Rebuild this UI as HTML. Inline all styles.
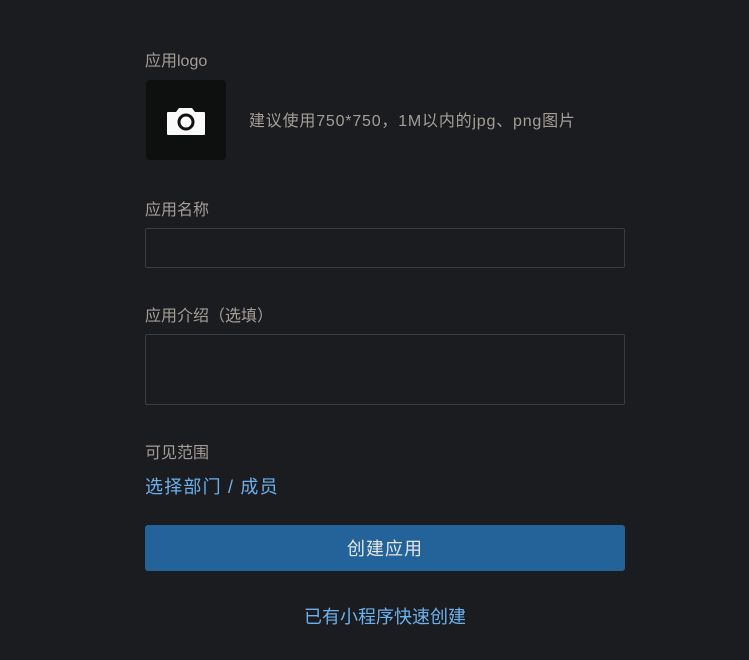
<!DOCTYPE html>
<html><head><meta charset="utf-8"><style>
body{margin:0;background:#1b1c1f;width:749px;height:660px;overflow:hidden;font-family:"Liberation Sans","Noto Sans CJK SC",sans-serif;}
.a{position:absolute;}
.lbl{color:#a49e97;font-size:16px;line-height:20px;left:145px;}
.inp{left:145px;width:478px;border:1px solid #3c3d40;border-radius:2px;background:#1b1c1f;}
</style></head><body>
<div class="a lbl" style="top:52px">应用logo</div>
<div class="a" style="left:146px;top:80px;width:80px;height:80px;background:#0e0f0f;border-radius:4px"></div>
<svg class="a" style="left:166px;top:105px" width="40" height="32" viewBox="0 0 40 32">
<path d="M2 7h8l3-4h13l3 4h9a1 1 0 0 1 1 1v21a1 1 0 0 1-1 1H2a1 1 0 0 1-1-1V8a1 1 0 0 1 1-1z" fill="#fafafa"/>
<circle cx="20" cy="17" r="7" fill="none" stroke="#111" stroke-width="3"/>
</svg>
<div class="a" style="left:249px;top:112px;color:#a49e97;font-size:16px;line-height:20px;letter-spacing:0.8px">建议使用750*750，1M以内的jpg、png图片</div>
<div class="a lbl" style="top:201px">应用名称</div>
<div class="a inp" style="top:228px;height:38px"></div>
<div class="a lbl" style="top:307px">应用介绍（选填）</div>
<div class="a inp" style="top:334px;height:69px"></div>
<div class="a lbl" style="top:444px">可见范围</div>
<div class="a" style="left:145px;top:476px;color:#6cb1ee;font-size:18px;line-height:22px;letter-spacing:1.2px">选择部门 / 成员</div>
<div class="a" style="left:145px;top:525px;width:480px;height:46px;background:#246399;border-radius:3px;color:#e6e6e6;font-size:18px;line-height:48px;text-align:center;letter-spacing:1px">创建应用</div>
<div class="a" style="left:145px;top:606px;width:480px;text-align:center;color:#6cb1ee;font-size:18px;line-height:22px">已有小程序快速创建</div>
</body></html>
